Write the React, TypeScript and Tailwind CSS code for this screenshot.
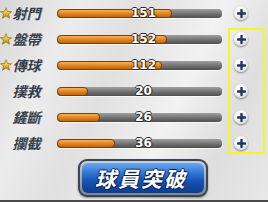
const stats = [
  { name: "射門", value: 151, fill: 115, star: true },
  { name: "盤帶", value: 152, fill: 110, star: true },
  { name: "傳球", value: 112, fill: 105, star: true },
  { name: "撲救", value: 20, fill: 31, star: false },
  { name: "鏟斷", value: 26, fill: 43, star: false },
  { name: "攔截", value: 36, fill: 58, star: false },
];

function Star() {
  return (
    <svg width="12" height="12" viewBox="0 0 24 24">
      <defs>
        <linearGradient id="sg" x1="0" y1="0" x2="0" y2="1">
          <stop offset="0" stopColor="#fff3a0" />
          <stop offset="0.5" stopColor="#f2c22a" />
          <stop offset="1" stopColor="#b07a10" />
        </linearGradient>
      </defs>
      <polygon
        points="12,1.5 15,9 23,9.3 16.8,14.3 19,22.5 12,17.8 5,22.5 7.2,14.3 1,9.3 9,9"
        fill="url(#sg)"
        stroke="#8a6a20"
        strokeWidth="1.4"
        strokeLinejoin="round"
      />
    </svg>
  );
}

function PlusButton() {
  return (
    <div className="w-[14px] h-[14px] rounded-full bg-[radial-gradient(circle_at_40%_35%,#ffffff_0%,#f2f2f2_45%,#c4c4c4_100%)] shadow-[0_1px_2px_rgba(0,0,0,0.45)] flex items-center justify-center">
      <svg width="9" height="9" viewBox="0 0 10 10">
        <path d="M5 1v8M1 5h8" stroke="#1d3461" strokeWidth="2.6" strokeLinecap="round" />
      </svg>
    </div>
  );
}

function Bar({ value, fill }: { value: number; fill: number }) {
  return (
    <div className="relative w-[165px] h-[9px]">
      <div className="w-full h-full rounded-[4px] bg-[linear-gradient(#a0a0a0,#6c6c6c_60%,#4e4e4e)] shadow-[0_1px_0_rgba(255,255,255,0.7)] overflow-hidden">
        <div
          className="h-full rounded-[4px] border border-[#7a3e08] bg-[linear-gradient(#f6b25a,#e58a22_45%,#c06410)]"
          style={{ width: fill }}
        />
      </div>
      <div className="absolute left-0 right-0 top-[-4px] h-[17px] flex items-center justify-center pl-[8px] text-[12px] leading-none font-bold text-white font-['DejaVu_Sans',sans-serif] [text-shadow:-1px_0_#2a2a2a,1px_0_#2a2a2a,0_-1px_#2a2a2a,0_1px_#2a2a2a]">
        {value}
      </div>
    </div>
  );
}

export default function App() {
  return (
    <div className="relative w-[268px] h-[202px] overflow-hidden flex flex-col bg-[linear-gradient(115deg,#d6d6d6_0%,#ececec_22%,#e0e0e0_40%,#f2f2f2_62%,#dedede_80%,#e8e8e8_100%)]">
      <div className="flex flex-col">
        {stats.map((s) => (
          <div key={s.name} className="h-[26px] flex items-center">
            <div className="w-[14px] flex justify-start">{s.star && <Star />}</div>
            <div className="w-[30px] text-[14px] leading-none font-bold text-[#353b47] font-['Noto_Sans_CJK_TC',sans-serif] [transform:skewX(-14deg)] [text-shadow:0_0_2px_#ffffff,0_0_1px_#ffffff,0.5px_0_#353b47]">
              {s.name}
            </div>
            <div className="w-[13px]" />
            <Bar value={s.value} fill={s.fill} />
            <div className="w-[12px]" />
            <PlusButton />
          </div>
        ))}
      </div>
      <div className="flex-1 flex justify-start pt-[3px] pl-[78px]">
        <div className="w-[130px] h-[38px] rounded-[9px] bg-[#3b4654] p-[2px] shadow-[0_1px_2px_rgba(0,0,0,0.4)]">
          <div className="w-full h-full rounded-[7px] bg-[linear-gradient(#c9d0d8,#7d8894)] p-[2px]">
            <div className="w-full h-full rounded-[6px] bg-[linear-gradient(#6aa8ee_0%,#2f74d2_35%,#1553b4_60%,#0d3c8e_100%)] flex items-center justify-center">
              <span className="inline-block [transform:skewX(-14deg)] text-[21px] leading-none font-bold tracking-[2px] text-white font-['Noto_Sans_CJK_TC',sans-serif] [text-shadow:-1px_0_#0b2350,1px_0_#0b2350,0_-1px_#0b2350,0_1px_#0b2350,1px_1px_#0b2350]">
                球員突破
              </span>
            </div>
          </div>
        </div>
      </div>
      <div className="h-[2px] bg-[#4a4a4a]" />
      <div className="absolute left-[228px] top-[28px] w-[37px] h-[126px] border-2 border-[#f7f71e]" />
    </div>
  );
}
